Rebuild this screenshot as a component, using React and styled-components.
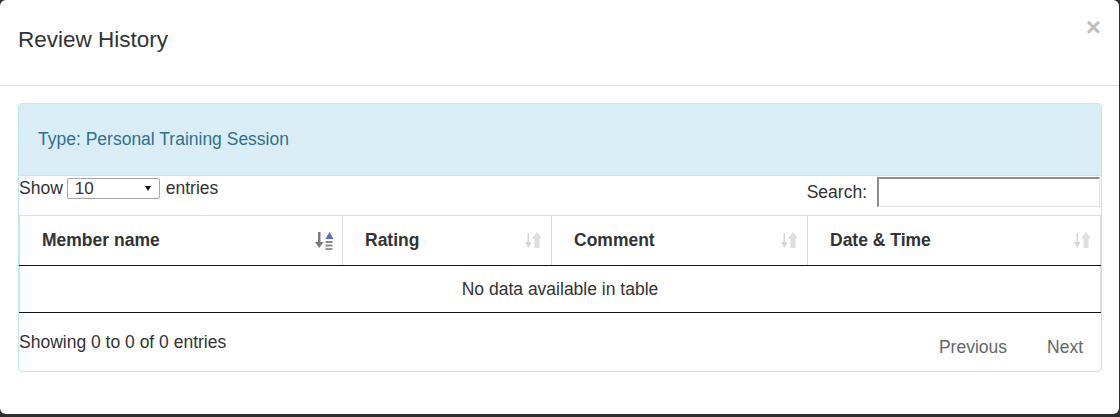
import React from "react";
import styled, { createGlobalStyle } from "styled-components";

const GlobalStyle = createGlobalStyle`
  html, body {
    margin: 0;
    padding: 0;
    background: #2e2e2e;
    font-family: "Liberation Sans", Arial, sans-serif;
    font-size: 17.5px;
    color: #333;
  }
`;

const Modal = styled.div`
  width: 1119px;
  height: 414px;
  background: #fff;
  border-radius: 6px;
  box-sizing: border-box;
  overflow: hidden;
  display: flex;
  flex-direction: column;
`;

const Header = styled.header`
  height: 86px;
  box-sizing: border-box;
  border-bottom: 1px solid #e5e5e5;
  padding: 24px 18px 0 18px;
  display: flex;
  justify-content: space-between;
  align-items: flex-start;
`;

const Title = styled.h4`
  margin: 0;
  font-size: 22.5px;
  font-weight: 400;
  line-height: 32px;
  color: #333;
`;

const Close = styled.button`
  border: 0;
  background: none;
  padding: 0;
  margin-top: -10px;
  font-family: "Liberation Sans", Arial, sans-serif;
  font-size: 26px;
  font-weight: 700;
  line-height: 1;
  color: #000;
  opacity: 0.25;
  cursor: pointer;
`;

const Body = styled.div`
  padding: 17px 17px 0 18px;
`;

const Panel = styled.section`
  border: 1px solid #bce8f1;
  border-radius: 4px;
  background: #fff;
`;

const PanelHeading = styled.div`
  height: 71px;
  border-bottom: 1px solid #bce8f1;
  background: #d9edf7;
  color: #31708f;
  padding: 0 19px;
  display: flex;
  align-items: center;
  border-radius: 3px 3px 0 0;
`;

const Controls = styled.div`
  height: 39px;
  display: flex;
  justify-content: space-between;
  align-items: flex-start;
  padding-top: 1px;
  box-sizing: border-box;
`;

const Length = styled.label`
  display: flex;
  align-items: center;
  height: 22px;
  gap: 4px;
`;

const SelectWrap = styled.span`
  position: relative;
  display: inline-block;
  margin-right: 2px;
`;

const Select = styled.select`
  appearance: none;
  width: 93px;
  height: 21px;
  border: 1px solid #a6a6a6;
  border-radius: 2px;
  background: #fff;
  padding: 0 0 0 7px;
  font-family: "Liberation Sans", Arial, sans-serif;
  font-size: 17px;
  color: #333;
  display: block;
`;

const Caret = styled.span`
  position: absolute;
  right: 9px;
  top: 8px;
  width: 0;
  height: 0;
  border-left: 3.5px solid transparent;
  border-right: 3.5px solid transparent;
  border-top: 5px solid #111;
  pointer-events: none;
`;

const Filter = styled.label`
  display: flex;
  align-items: center;
  gap: 10px;
  height: 30px;
  margin-right: 1px;
`;

const SearchInput = styled.input`
  width: 223px;
  height: 30px;
  box-sizing: border-box;
  border-style: solid;
  border-width: 2px 1px 1px 2px;
  border-color: #8d8d8d #e2e2e2 #e2e2e2 #8d8d8d;
  margin: 0;
  padding: 0 4px;
  font-family: "Liberation Sans", Arial, sans-serif;
  font-size: 17px;
`;

const Table = styled.table`
  width: 1081px;
  border-collapse: collapse;
  table-layout: fixed;
`;

const Th = styled.th`
  height: 50px;
  box-sizing: border-box;
  padding: 0 8px 0 22px;
  border: 1px solid #ddd;
  border-bottom: 1px solid #111;
  text-align: left;
  font-weight: 700;
  color: #333;
`;

const ThInner = styled.div`
  display: flex;
  align-items: center;
  justify-content: space-between;
`;

const Td = styled.td`
  height: 46px;
  padding: 0;
  border-left: 1px solid #ddd;
  border-right: 1px solid #ddd;
  border-bottom: 1px solid #111;
  text-align: center;
  color: #333;
`;

const Footer = styled.div`
  height: 58px;
  display: flex;
  justify-content: space-between;
  align-items: flex-start;
`;

const Info = styled.div`
  padding-top: 17px;
  line-height: 25px;
`;

const Paginate = styled.div`
  padding-top: 22px;
  display: flex;
  gap: 4px;
`;

const PageButton = styled.span`
  padding: 0 18px;
  line-height: 25px;
  color: #666;
  cursor: default;
`;

function SortIcon({ active }) {
  if (active) {
    return (
      <svg width="20" height="19" viewBox="0 0 20 19">
        <rect x="4" y="1" width="2.5" height="12" fill="#7a7a7a" />
        <polygon points="1,11 9.5,11 5.25,17" fill="#7a7a7a" />
        <polygon points="11.5,8 15.5,1 19.5,8" fill="#5a67d8" />
        <rect x="11.5" y="10" width="7" height="2" fill="#8a8a8a" />
        <rect x="11.5" y="13.5" width="7" height="2" fill="#8a8a8a" />
        <rect x="11.5" y="17" width="7" height="2" fill="#9a9a9a" />
      </svg>
    );
  }
  return (
    <svg width="20" height="19" viewBox="0 0 20 19">
      <rect x="4.5" y="2" width="1.5" height="11" fill="#d4d4d4" />
      <polygon points="2,11 8.5,11 5.25,17" fill="#d4d4d4" />
      <polygon points="14,1 19,7.5 16.5,7.5 16.5,17 11.5,17 11.5,7.5 9,7.5" fill="#dedede" />
    </svg>
  );
}

const columns = [
  { name: "Member name", width: 323, active: true },
  { name: "Rating", width: 209 },
  { name: "Comment", width: 256 },
  { name: "Date & Time", width: 293 },
];

export default function App() {
  return (
    <>
      <GlobalStyle />
      <Modal>
        <Header>
          <Title>Review History</Title>
          <Close aria-label="Close">×</Close>
        </Header>
        <Body>
          <Panel>
            <PanelHeading>Type: Personal Training Session</PanelHeading>
            <Controls>
              <Length>
                Show
                <SelectWrap>
                  <Select defaultValue="10">
                    <option value="10">10</option>
                    <option value="25">25</option>
                    <option value="50">50</option>
                    <option value="100">100</option>
                  </Select>
                  <Caret />
                </SelectWrap>
                entries
              </Length>
              <Filter>
                Search:
                <SearchInput type="search" />
              </Filter>
            </Controls>
            <Table>
              <colgroup>
                {columns.map((c) => (
                  <col key={c.name} style={{ width: c.width }} />
                ))}
              </colgroup>
              <thead>
                <tr>
                  {columns.map((c) => (
                    <Th key={c.name}>
                      <ThInner>
                        {c.name}
                        <SortIcon active={c.active} />
                      </ThInner>
                    </Th>
                  ))}
                </tr>
              </thead>
              <tbody>
                <tr>
                  <Td colSpan={4}>No data available in table</Td>
                </tr>
              </tbody>
            </Table>
            <Footer>
              <Info>Showing 0 to 0 of 0 entries</Info>
              <Paginate>
                <PageButton>Previous</PageButton>
                <PageButton>Next</PageButton>
              </Paginate>
            </Footer>
          </Panel>
        </Body>
      </Modal>
    </>
  );
}
